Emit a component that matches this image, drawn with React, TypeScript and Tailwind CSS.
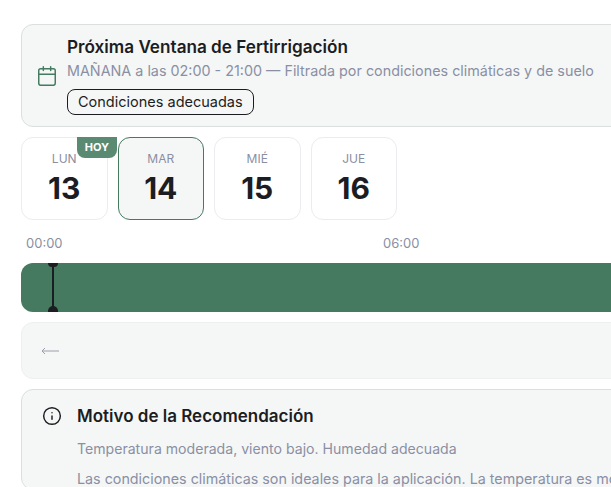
import { Calendar, Info } from "lucide-react";

const days = [
  { label: "LUN", num: "13", today: true },
  { label: "MAR", num: "14", active: true },
  { label: "MIÉ", num: "15" },
  { label: "JUE", num: "16" },
];

export default function App() {
  return (
    <div className="h-[487px] w-[611px] overflow-hidden bg-white font-['Inter',sans-serif]">
      <div className="flex w-[900px] flex-col pl-[21px] pt-6">
        {/* Ventana */}
        <div className="flex h-[103px] items-center gap-[9px] rounded-xl border border-[#d9e0de] bg-[#f5f7f7] pl-[14px]">
          <Calendar className="mt-[1px] size-[22px] text-[#457a60]" strokeWidth={1.6} />
          <div className="mt-[2px] flex flex-col items-start">
            <h2 className="-mt-[3px] text-[17.15px] leading-6 font-semibold text-[#1c1d22]">Próxima Ventana de Fertirrigación</h2>
            <p className="mt-[2px] text-[14.35px] leading-5 text-[#8a8fa3]">
              MAÑANA a las 02:00 - 21:00 — Filtrada por condiciones climáticas y de suelo
            </p>
            <span className="mt-[8px] rounded-lg border border-[#1c1d22] px-[10px] text-[14.5px] leading-[24px] text-[#1c1d22]">
              Condiciones adecuadas
            </span>
          </div>
        </div>

        {/* Dias */}
        <div className="mt-[10px] flex gap-[10px]">
          {days.map((d) => (
            <div
              key={d.num}
              className={`relative flex h-[83px] w-[86.5px] flex-col items-center rounded-xl border pt-[13px] ${
                d.active ? "border-[#457a60] bg-[#f5f7f7]" : "border-[#ececf0] bg-white"
              }`}
            >
              <span className="text-xs leading-4 text-[#8a8fa3]">{d.label}</span>
              <span className="mt-[3px] text-[30px] leading-9 font-bold text-[#1c1d22]">{d.num}</span>
              {d.today && (
                <span className="absolute -top-px -right-[10px] rounded-b-lg bg-[#5b8a73] px-[7.5px] text-[11px] leading-[21px] font-bold text-white">
                  HOY
                </span>
              )}
            </div>
          ))}
        </div>

        {/* Horas */}
        <div className="mt-[14px] flex pl-[5px] text-[13px] leading-[18px] text-[#8a8fa3]">
          <span className="w-[357px]">00:00</span>
          <span>06:00</span>
        </div>

        {/* Barra */}
        <div className="relative mt-[11px] h-[49px] rounded-l-xl bg-[#457a60]">
          <div className="absolute top-0 left-[31px] h-full w-[2px] bg-[#1c1d22]" />
          <div className="absolute top-0 left-[27px] h-[4px] w-[10px] rounded-b-[5px] bg-[#1c1d22]" />
          <div className="absolute bottom-0 left-[27px] h-[6px] w-[10px] rounded-t-[5px] bg-[#1c1d22]" />
        </div>

        {/* Flecha */}
        <div className="mt-[10px] flex h-[57px] items-center rounded-xl border border-[#eef0f0] bg-[#f5f7f7] pl-[19px]">
          <svg width="18" height="8" viewBox="0 0 18 8" fill="none" stroke="#9a9ea8" strokeWidth="1" className="mt-[1px]">
            <path d="M1 4H18M4 1L1 4L4 7" />
          </svg>
        </div>

        {/* Motivo */}
        <div className="mt-[10px] rounded-xl border border-[#d9e0de] bg-[#f5f7f7] pt-[14px] pl-5">
          <div className="flex items-center gap-[15px]">
            <Info className="size-5 text-[#1c1d22]" strokeWidth={1.75} />
            <h3 className="text-[17px] leading-6 font-semibold text-[#1c1d22]">Motivo de la Recomendación</h3>
          </div>
          <p className="mt-[11px] pl-[35px] text-[14.1px] leading-5 text-[#8a8fa3]">Temperatura moderada, viento bajo. Humedad adecuada</p>
          <p className="mt-[10px] pl-[35px] text-[14.3px] leading-5 whitespace-nowrap text-[#8a8fa3]">
            Las condiciones climáticas son ideales para la aplicación. La temperatura es moderada y el viento es bajo.
          </p>
        </div>
      </div>
    </div>
  );
}
